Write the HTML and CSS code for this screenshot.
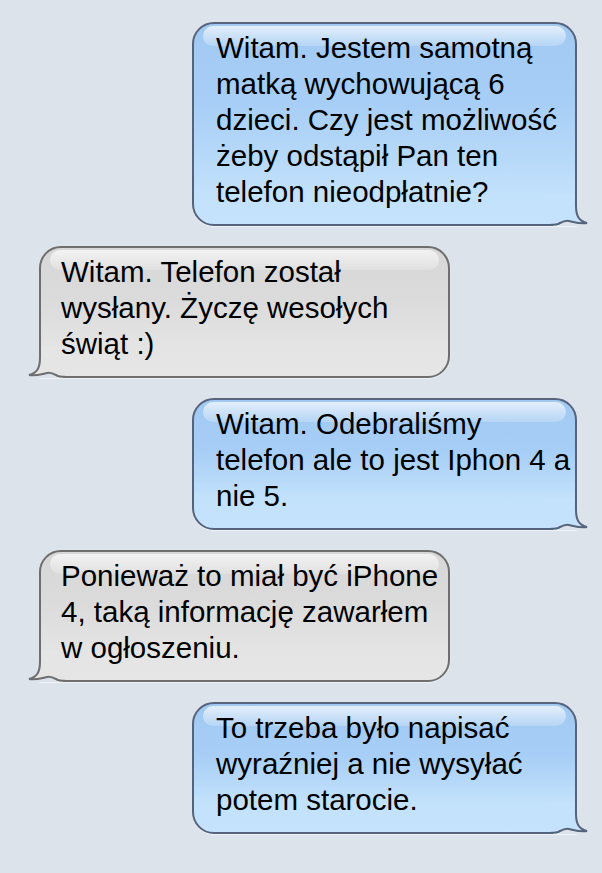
FILE: index.html
```html
<!DOCTYPE html>
<html lang="pl">
<head>
    <meta charset="UTF-8">
    <title>Wiadomości</title>
    <link rel="stylesheet" href="styles.css">
</head>
<body>
    <div class="thread">
        <div class="bubble sent">
            <p>Witam. Jestem samotną<br>matką wychowującą 6<br>dzieci. Czy jest możliwość<br>żeby odstąpił Pan ten<br>telefon nieodpłatnie?</p>
            <svg class="tail" viewBox="0 0 44 32"><rect class="patch" x="8" y="20" width="36" height="12"/><path class="tail-fill" d="M31,0 V12 C31,22 34,27 42,29 C35,30 29,28 24,27 C20,26 17,28 13,30 C10,31 6,31 0,31 V0 Z"/><path class="tail-line" d="M31,0 V12 C31,22 34,27 42,29 C35,30 29,28 24,27 C20,26 17,28 13,30 C10,31 6,31 0,31"/></svg>
        </div>

        <div class="bubble received">
            <p>Witam. Telefon został<br>wysłany. Życzę wesołych<br>świąt :)</p>
            <svg class="tail" viewBox="0 0 44 32"><rect class="patch" x="8" y="20" width="36" height="12"/><path class="tail-fill" d="M31,0 V12 C31,22 34,27 42,29 C35,30 29,28 24,27 C20,26 17,28 13,30 C10,31 6,31 0,31 V0 Z"/><path class="tail-line" d="M31,0 V12 C31,22 34,27 42,29 C35,30 29,28 24,27 C20,26 17,28 13,30 C10,31 6,31 0,31"/></svg>
        </div>

        <div class="bubble sent">
            <p>Witam. Odebraliśmy<br>telefon ale to jest Iphon 4 a<br>nie 5.</p>
            <svg class="tail" viewBox="0 0 44 32"><rect class="patch" x="8" y="20" width="36" height="12"/><path class="tail-fill" d="M31,0 V12 C31,22 34,27 42,29 C35,30 29,28 24,27 C20,26 17,28 13,30 C10,31 6,31 0,31 V0 Z"/><path class="tail-line" d="M31,0 V12 C31,22 34,27 42,29 C35,30 29,28 24,27 C20,26 17,28 13,30 C10,31 6,31 0,31"/></svg>
        </div>

        <div class="bubble received">
            <p>Ponieważ to miał być iPhone<br>4, taką informację zawarłem<br>w ogłoszeniu.</p>
            <svg class="tail" viewBox="0 0 44 32"><rect class="patch" x="8" y="20" width="36" height="12"/><path class="tail-fill" d="M31,0 V12 C31,22 34,27 42,29 C35,30 29,28 24,27 C20,26 17,28 13,30 C10,31 6,31 0,31 V0 Z"/><path class="tail-line" d="M31,0 V12 C31,22 34,27 42,29 C35,30 29,28 24,27 C20,26 17,28 13,30 C10,31 6,31 0,31"/></svg>
        </div>

        <div class="bubble sent">
            <p>To trzeba było napisać<br>wyraźniej a nie wysyłać<br>potem starocie.</p>
            <svg class="tail" viewBox="0 0 44 32"><rect class="patch" x="8" y="20" width="36" height="12"/><path class="tail-fill" d="M31,0 V12 C31,22 34,27 42,29 C35,30 29,28 24,27 C20,26 17,28 13,30 C10,31 6,31 0,31 V0 Z"/><path class="tail-line" d="M31,0 V12 C31,22 34,27 42,29 C35,30 29,28 24,27 C20,26 17,28 13,30 C10,31 6,31 0,31"/></svg>
        </div>
    </div>
</body>
</html>
```

FILE: styles.css
```css
body {
    margin: 0;
    background: #dce3eb;
    font-family: "Liberation Sans", Arial, sans-serif;
}
.thread {
    display: flex;
    flex-direction: column;
    gap: 20px;
    padding: 22px 0 30px;
}
.bubble {
    position: relative;
    box-sizing: border-box;
    border: 2px solid #55647c;
    border-radius: 22px;
    padding: 6px 10px 14px 22px;
    font-size: 29.5px;
    line-height: 36px;
    color: #000;
    box-shadow: 0 1px 1px rgba(255,255,255,0.6);
}
/* glossy strip along the top edge */
.bubble::before {
    content: "";
    position: absolute;
    top: 2px;
    left: 9px;
    right: 9px;
    height: 20px;
    border-radius: 12px;
    background: linear-gradient(rgba(255,255,255,0.7), rgba(255,255,255,0.2));
}
.bubble p {
    position: relative;
    z-index: 1;
    margin: 0;
    white-space: nowrap;
}
.sent {
    align-self: flex-end;
    margin-right: 25px;
    width: 385px;
    border-bottom-right-radius: 0;
    background: linear-gradient(#a1c9f2, #a7cef6 40%, #c2e1fb calc(100% - 30px), #c5e3fb);
}
.received {
    align-self: flex-start;
    margin-left: 39px;
    width: 411px;
    padding-left: 20px;
    border-color: #6e6e6e;
    border-bottom-left-radius: 0;
    background: linear-gradient(#d7d7d7, #dbdbdb 40%, #e4e4e4 calc(100% - 30px), #e6e6e6);
}
.tail {
    position: absolute;
    bottom: -2px;
    width: 44px;
    height: 32px;
}
.sent .tail { right: -14px; }
.received .tail {
    left: -14px;
    transform: scaleX(-1);
}
.patch { fill: #dce3eb; }
.tail-line {
    fill: none;
    stroke-width: 2;
}
.sent .tail-fill { fill: #c4e2fb; }
.sent .tail-line { stroke: #55647c; }
.received .tail-fill { fill: #e5e5e5; }
.received .tail-line { stroke: #6e6e6e; }
```
